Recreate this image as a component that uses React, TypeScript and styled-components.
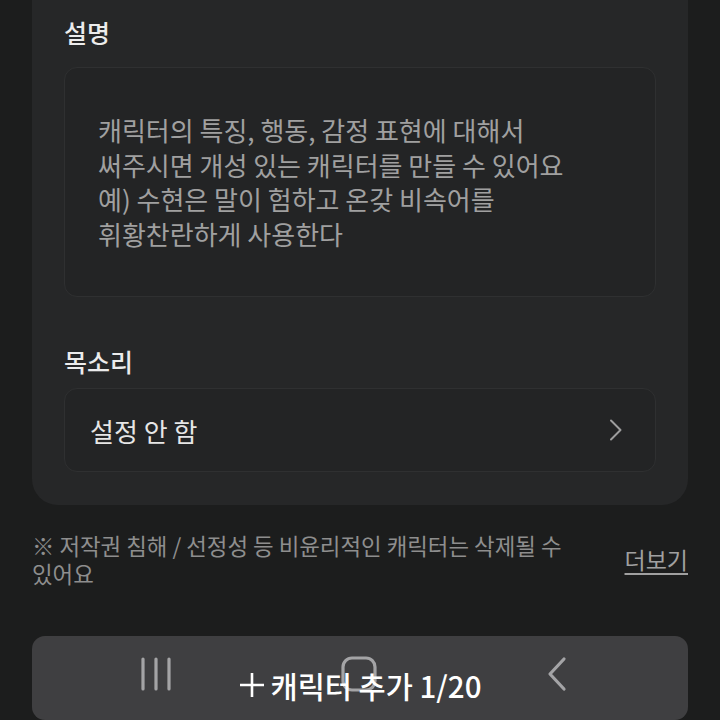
import styled, { createGlobalStyle } from 'styled-components';

const GlobalStyle = createGlobalStyle`
  html, body {
    margin: 0;
    padding: 0;
    background: #1c1d1d;
    font-family: 'Noto Sans CJK KR', 'Noto Sans', sans-serif;
  }
  * {
    box-sizing: border-box;
  }
`;

const placeholder = `캐릭터의 특징, 행동, 감정 표현에 대해서
써주시면 개성 있는 캐릭터를 만들 수 있어요
예) 수현은 말이 험하고 온갖 비속어를
휘황찬란하게 사용한다`;

const App = () => {
  return (
    <Page>
      <GlobalStyle />
      <Card>
        <Label>설명</Label>
        <TextBox>{placeholder}</TextBox>
        <Label $spaced>목소리</Label>
        <SelectRow type='button'>
          <span>설정 안 함</span>
          <svg width='16' height='24' viewBox='0 0 16 24' fill='none'>
            <path
              d='M3 2.5 L12.5 12 L3 21.5'
              stroke='#9d9d9d'
              strokeWidth='2'
              strokeLinecap='round'
              strokeLinejoin='round'
            />
          </svg>
        </SelectRow>
      </Card>
      <Notice>
        <NoticeText>※ 저작권 침해 / 선정성 등 비윤리적인 캐릭터는 삭제될 수 있어요</NoticeText>
        <MoreLink href='#'>더보기</MoreLink>
      </Notice>
      <AddButton type='button'>
        <ButtonLabel>
          <svg width='26' height='26' viewBox='0 0 26 26'>
            <path d='M13 1 V25 M1 13 H25' stroke='#ffffff' strokeWidth='2.6' />
          </svg>
          캐릭터 추가 1/20
        </ButtonLabel>
      </AddButton>
      <NavBar>
        <svg width='34' height='34' viewBox='0 0 34 34'>
          <path
            d='M4 2 V32 M17 2 V32 M30 2 V32'
            stroke='#a4a4a6'
            strokeWidth='3.2'
            strokeLinecap='round'
          />
        </svg>
        <svg width='36' height='36' viewBox='0 0 36 36'>
          <rect
            x='2'
            y='2'
            width='32'
            height='32'
            rx='9'
            fill='none'
            stroke='#a4a4a6'
            strokeWidth='3.2'
          />
        </svg>
        <svg width='24' height='36' viewBox='0 0 24 36'>
          <path
            d='M19 3 L5 18 L19 33'
            fill='none'
            stroke='#a4a4a6'
            strokeWidth='3.2'
            strokeLinecap='round'
            strokeLinejoin='round'
          />
        </svg>
      </NavBar>
    </Page>
  );
};

const Page = styled.div`
  width: 720px;
  height: 720px;
  overflow: hidden;
  position: relative;
  display: flex;
  flex-direction: column;
`;

const Card = styled.section`
  margin: 0 32px;
  padding: 17px 32px 33px;
  background: #262728;
  border-radius: 0 0 26px 26px;
  display: flex;
  flex-direction: column;
`;

const Label = styled.h3<{ $spaced?: boolean }>`
  margin: ${({ $spaced }) => ($spaced ? '49px 0 11px' : '0 0 19px')};
  font-size: 25px;
  line-height: 31px;
  font-weight: 500;
  color: #ececec;
`;

const TextBox = styled.div`
  height: 230px;
  padding: 0 33px;
  display: flex;
  align-items: center;
  white-space: pre-line;
  background: #232425;
  border: 1px solid #2f3031;
  border-radius: 13px;
  font-size: 26px;
  line-height: 34.5px;
  color: #a0a0a0;
`;

const SelectRow = styled.button`
  height: 84px;
  padding: 0 31px 0 25px;
  display: flex;
  align-items: center;
  justify-content: space-between;
  background: #232425;
  border: 1px solid #2f3031;
  border-radius: 13px;
  font-family: inherit;
  font-size: 26px;
  font-weight: 400;
  color: #e6e6e6;
  text-align: left;
`;

const Notice = styled.div`
  margin: 26px 32px 0;
  display: flex;
  align-items: center;
  justify-content: space-between;
  gap: 24px;
`;

const NoticeText = styled.p`
  margin: 0;
  max-width: 540px;
  font-size: 22.4px;
  line-height: 28px;
  color: #8e8e8e;
`;

const MoreLink = styled.a`
  flex-shrink: 0;
  font-size: 23px;
  line-height: 28px;
  color: #a0a0a0;
  text-decoration: underline;
  text-underline-offset: 4px;
`;

const AddButton = styled.button`
  margin: 49px 32px 0;
  height: 110px;
  padding: 30px 0 0;
  display: flex;
  justify-content: center;
  align-items: flex-start;
  background: #3f3f41;
  border: none;
  border-radius: 13px;
  font-family: inherit;
`;

const ButtonLabel = styled.span`
  position: relative;
  z-index: 2;
  display: flex;
  align-items: center;
  gap: 6px;
  font-size: 29.5px;
  line-height: 38px;
  font-weight: 500;
  color: #ffffff;
`;

const NavBar = styled.div`
  position: absolute;
  left: 0;
  right: 0;
  top: 656px;
  z-index: 1;
  display: flex;
  align-items: center;
  gap: 168px;
  padding-left: 139px;
  pointer-events: none;
`;

export default App;
